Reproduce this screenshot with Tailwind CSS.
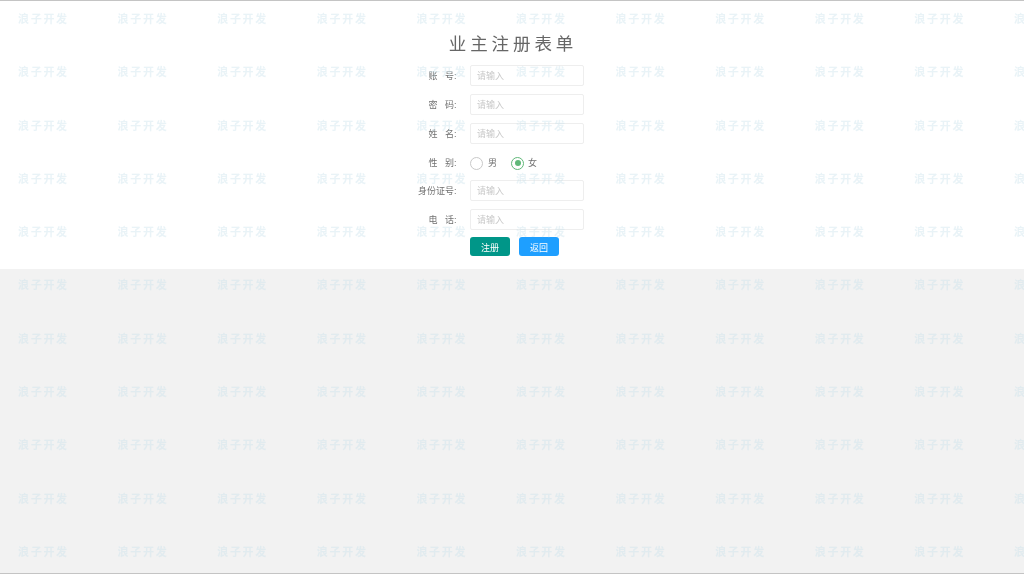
<!doctype html>
<html lang="zh"><head><meta charset="utf-8"><script src="https://cdn.jsdelivr.net/npm/@tailwindcss/browser@4"></script></head>
<body class="relative h-[574px] w-[1024px] overflow-hidden bg-[#f2f2f2] font-['Liberation_Sans','Noto_Sans_CJK_SC',sans-serif] text-[#707070]">
<div class="flex h-[574px] flex-col border-y border-[#c4c4c4]">
<main class="flex h-[268px] flex-col bg-white pt-[32px] blur-[0.3px]">
<h1 class="h-[21px] text-center text-[17.5px] leading-[23px] tracking-[3.9px] pl-[2px] text-[#666] font-normal">业主注册表单</h1>
<form class="mt-[11px] ml-[400px] flex flex-col text-[9px] leading-[21px]">
<div class="flex h-[21px] items-center"><label class="w-[57px] pr-[0.5px] pt-[1px] text-right whitespace-pre">账   号:</label><input placeholder="请输入" class="ml-[13px] h-[21px] w-[114px] rounded-[2px] border border-[#eeeeee] bg-transparent px-[6px] pt-[1px] text-[9px] placeholder:text-[#c9c9c9]"></div>
<div class="mt-[8px] flex h-[21px] items-center"><label class="w-[57px] pr-[0.5px] pt-[1px] text-right whitespace-pre">密   码:</label><input placeholder="请输入" class="ml-[13px] h-[21px] w-[114px] rounded-[2px] border border-[#eeeeee] bg-transparent px-[6px] pt-[1px] text-[9px] placeholder:text-[#c9c9c9]"></div>
<div class="mt-[8px] flex h-[21px] items-center"><label class="w-[57px] pr-[0.5px] pt-[1px] text-right whitespace-pre">姓   名:</label><input placeholder="请输入" class="ml-[13px] h-[21px] w-[114px] rounded-[2px] border border-[#eeeeee] bg-transparent px-[6px] pt-[1px] text-[9px] placeholder:text-[#c9c9c9]"></div>
<div class="mt-[8px] flex h-[21px] items-center"><label class="w-[57px] pr-[0.5px] pt-[1px] text-right whitespace-pre">性   别:</label>
<div class="ml-[13px] flex items-center pt-[1px]"><span class="h-[13px] w-[13px] rounded-full border border-[#c9c9c9]"></span><span class="ml-[5px]">男</span>
<span class="ml-[14px] flex h-[13px] w-[13px] items-center justify-center rounded-full border border-[#5fb878]"><span class="h-[6px] w-[6px] rounded-full bg-[#5fb878]"></span></span><span class="ml-[4px]">女</span></div></div>
<div class="mt-[7px] flex h-[21px] items-center"><label class="w-[57px] pr-[0.5px] pt-[1px] text-right whitespace-pre">身份证号:</label><input placeholder="请输入" class="ml-[13px] h-[21px] w-[114px] rounded-[2px] border border-[#eeeeee] bg-transparent px-[6px] pt-[1px] text-[9px] placeholder:text-[#c9c9c9]"></div>
<div class="mt-[8px] flex h-[21px] items-center"><label class="w-[57px] pr-[0.5px] pt-[1px] text-right whitespace-pre">电   话:</label><input placeholder="请输入" class="ml-[13px] h-[21px] w-[114px] rounded-[2px] border border-[#eeeeee] bg-transparent px-[6px] pt-[1px] text-[9px] placeholder:text-[#c9c9c9]"></div>
<div class="mt-[7px] ml-[70px] flex gap-[9px]"><button type="button" class="h-[19px] w-[40px] rounded-[3px] bg-[#009688] pt-[1px] text-[9px] text-white">注册</button><button type="button" class="h-[19px] w-[40px] rounded-[3px] bg-[#1e9fff] pt-[1px] text-[9px] text-white">返回</button></div>
</form>
</main>
</div>
<div aria-hidden="true" class="pointer-events-none absolute left-[18px] top-[12px] grid w-[1100px] grid-cols-[repeat(11,99.6px)] auto-rows-[53.3px] text-[11px] leading-[14px] font-bold tracking-[1.7px] text-[#c8e0ea]/40 blur-[0.3px]">
<span>浪子开发</span><span>浪子开发</span><span>浪子开发</span><span>浪子开发</span><span>浪子开发</span><span>浪子开发</span><span>浪子开发</span><span>浪子开发</span><span>浪子开发</span><span>浪子开发</span><span>浪子开发</span>
<span>浪子开发</span><span>浪子开发</span><span>浪子开发</span><span>浪子开发</span><span>浪子开发</span><span>浪子开发</span><span>浪子开发</span><span>浪子开发</span><span>浪子开发</span><span>浪子开发</span><span>浪子开发</span>
<span>浪子开发</span><span>浪子开发</span><span>浪子开发</span><span>浪子开发</span><span>浪子开发</span><span>浪子开发</span><span>浪子开发</span><span>浪子开发</span><span>浪子开发</span><span>浪子开发</span><span>浪子开发</span>
<span>浪子开发</span><span>浪子开发</span><span>浪子开发</span><span>浪子开发</span><span>浪子开发</span><span>浪子开发</span><span>浪子开发</span><span>浪子开发</span><span>浪子开发</span><span>浪子开发</span><span>浪子开发</span>
<span>浪子开发</span><span>浪子开发</span><span>浪子开发</span><span>浪子开发</span><span>浪子开发</span><span>浪子开发</span><span>浪子开发</span><span>浪子开发</span><span>浪子开发</span><span>浪子开发</span><span>浪子开发</span>
<span>浪子开发</span><span>浪子开发</span><span>浪子开发</span><span>浪子开发</span><span>浪子开发</span><span>浪子开发</span><span>浪子开发</span><span>浪子开发</span><span>浪子开发</span><span>浪子开发</span><span>浪子开发</span>
<span>浪子开发</span><span>浪子开发</span><span>浪子开发</span><span>浪子开发</span><span>浪子开发</span><span>浪子开发</span><span>浪子开发</span><span>浪子开发</span><span>浪子开发</span><span>浪子开发</span><span>浪子开发</span>
<span>浪子开发</span><span>浪子开发</span><span>浪子开发</span><span>浪子开发</span><span>浪子开发</span><span>浪子开发</span><span>浪子开发</span><span>浪子开发</span><span>浪子开发</span><span>浪子开发</span><span>浪子开发</span>
<span>浪子开发</span><span>浪子开发</span><span>浪子开发</span><span>浪子开发</span><span>浪子开发</span><span>浪子开发</span><span>浪子开发</span><span>浪子开发</span><span>浪子开发</span><span>浪子开发</span><span>浪子开发</span>
<span>浪子开发</span><span>浪子开发</span><span>浪子开发</span><span>浪子开发</span><span>浪子开发</span><span>浪子开发</span><span>浪子开发</span><span>浪子开发</span><span>浪子开发</span><span>浪子开发</span><span>浪子开发</span>
<span>浪子开发</span><span>浪子开发</span><span>浪子开发</span><span>浪子开发</span><span>浪子开发</span><span>浪子开发</span><span>浪子开发</span><span>浪子开发</span><span>浪子开发</span><span>浪子开发</span><span>浪子开发</span>
</div>
</body></html>
